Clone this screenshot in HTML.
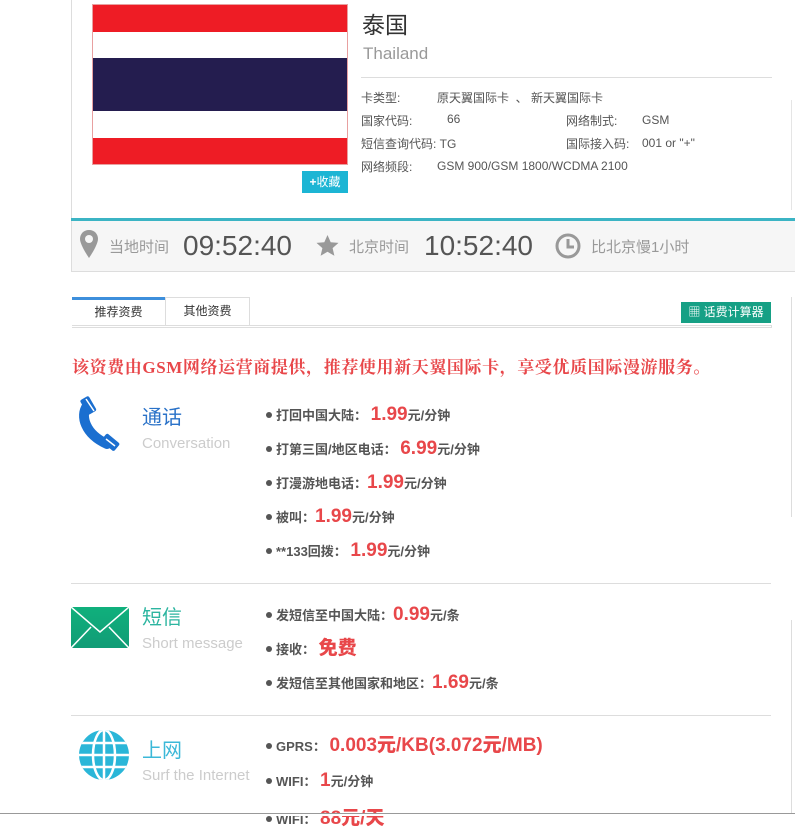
<!DOCTYPE html>
<html><head><meta charset="utf-8">
<style>
*{margin:0;padding:0;box-sizing:border-box}
body{width:795px;height:816px;overflow:hidden;background:#fff;font-family:"Liberation Sans","Noto Sans CJK SC",sans-serif;position:relative;color:#555}
.a{position:absolute;white-space:nowrap}
.sm{font-size:12px;color:#555}
.lbl{font-size:13px;font-weight:bold;color:#555;line-height:20px}
.lbl b{font-size:19px;color:#e8474a}
.dot{display:inline-block;width:6px;height:6px;border-radius:3px;background:#555;margin-right:4px;vertical-align:2px}
</style></head><body>
<div class="a" style="left:71px;top:0;width:1px;height:220px;background:#ddd"></div>
<div class="a" style="left:791px;top:100px;width:1px;height:110px;background:#e5e5e5"></div>
<div class="a" style="left:92px;top:4px;width:256px;height:161px;border:1px solid #e8a0a0">
<div style="height:27px;background:#ee1c25"></div>
<div style="height:26px;background:#fff"></div>
<div style="height:53px;background:#241d4f"></div>
<div style="height:27px;background:#fff"></div>
<div style="height:26px;background:#ee1c25"></div>
</div>
<div class="a" style="left:302px;top:171px;width:46px;height:22px;background:#1cb5d4;color:#fff;font-size:12px;line-height:22px;text-align:center"><b>+</b>收藏</div>
<div class="a" style="left:362px;top:6px;font-size:23px;color:#333">泰国</div>
<div class="a" style="left:363px;top:44px;font-size:17px;color:#999">Thailand</div>
<div class="a" style="left:361px;top:77px;width:411px;height:1px;background:#ddd"></div>
<div class="a sm" style="left:361px;top:89px">卡类型:</div>
<div class="a sm" style="left:437px;top:89px">原天翼国际卡 &nbsp;、 新天翼国际卡</div>
<div class="a sm" style="left:361px;top:112px">国家代码:</div>
<div class="a sm" style="left:447px;top:112px">66</div>
<div class="a sm" style="left:566px;top:112px">网络制式:</div>
<div class="a sm" style="left:642px;top:113px">GSM</div>
<div class="a sm" style="left:361px;top:135px">短信查询代码: TG</div>
<div class="a sm" style="left:566px;top:135px">国际接入码:</div>
<div class="a sm" style="left:642px;top:136px">001 or "+"</div>
<div class="a sm" style="left:361px;top:158px">网络频段:</div>
<div class="a sm" style="left:437px;top:159px">GSM 900/GSM 1800/WCDMA 2100</div>
<div class="a" style="left:71px;top:218px;width:724px;height:3px;background:#3bb4c4"></div>
<div class="a" style="left:71px;top:221px;width:724px;height:51px;background:#f6f6f6;border-bottom:1px solid #ddd;border-left:1px solid #ddd"></div>
<svg class="a" style="left:79px;top:229px" width="20" height="30" viewBox="0 0 20 30"><path d="M10 1C4.5 1 1 5 1 10c0 6 9 19 9 19s9-13 9-19c0-5-3.5-9-9-9z" fill="#999"/><circle cx="10" cy="10" r="4" fill="#f6f6f6"/></svg>
<div class="a" style="left:109px;top:236px;font-size:15px;color:#999">当地时间</div>
<div class="a" style="left:183px;top:230px;font-size:28px;color:#555">09:52:40</div>
<svg class="a" style="left:315px;top:234px" width="25" height="24" viewBox="0 0 24 24"><path d="M12 1l3.2 7.2 7.8.7-5.9 5.2 1.8 7.7L12 17.8l-6.9 4 1.8-7.7L1 8.9l7.8-.7z" fill="#999"/></svg>
<div class="a" style="left:349px;top:236px;font-size:15px;color:#999">北京时间</div>
<div class="a" style="left:424px;top:230px;font-size:28px;color:#555">10:52:40</div>
<svg class="a" style="left:555px;top:233px" width="26" height="26" viewBox="0 0 26 26"><circle cx="13" cy="13" r="11" fill="none" stroke="#999" stroke-width="3"/><path d="M13 6v8h6" fill="none" stroke="#999" stroke-width="3"/></svg>
<div class="a" style="left:591px;top:236px;font-size:15px;color:#999">比北京慢1小时</div>
<div class="a" style="left:72px;top:297px;width:93px;height:29px;border-top:3px solid #3d8fdc;background:#fff;font-size:12px;color:#333;text-align:center;line-height:25px">推荐资费</div>
<div class="a" style="left:165px;top:297px;width:85px;height:29px;border:1px solid #ddd;border-bottom:none;font-size:12px;color:#333;text-align:center;line-height:27px">其他资费</div>
<div class="a" style="left:72px;top:325px;width:700px;height:3px;border:1px solid #ddd;border-left:none"></div>
<div class="a" style="left:681px;top:302px;width:90px;height:21px;background:#16a085;color:#fff;font-size:12px;line-height:21px;text-align:center">▦ 话费计算器</div>
<div class="a" style="left:791px;top:297px;width:4px;height:220px;border-left:1px solid #ddd"></div>
<div class="a" style="left:791px;top:620px;width:4px;height:196px;border-left:1px solid #ddd"></div>
<div class="a" style="left:72px;top:353px;font-size:17px;font-weight:bold;color:#e8474a;letter-spacing:0.6px;font-family:'Liberation Serif','Noto Serif CJK SC',serif">该资费由GSM网络运营商提供，推荐使用新天翼国际卡，享受优质国际漫游服务。</div>
<svg class="a" style="left:77px;top:396px" width="44" height="58" viewBox="0 0 44 58"><path d="M10 10C3 20 8 38 30 48" stroke="#1b6fd0" stroke-width="10" fill="none" stroke-linecap="round"/><rect x="6" y="1" width="10" height="17" rx="2" transform="rotate(-30 11 9)" fill="#1b6fd0"/><rect x="28" y="38" width="10" height="17" rx="2" transform="rotate(-50 33 46)" fill="#1b6fd0"/><path d="M9 3l8 12M29 43l9 7" stroke="#fff" stroke-width="1.5"/></svg>
<div class="a" style="left:142px;top:401px;font-size:20px;color:#2a72c8">通话</div>
<div class="a" style="left:142px;top:435px;font-size:15px;color:#ccc">Conversation</div>
<div class="a lbl" style="left:266px;top:405px"><span class="dot"></span>打回中国大陆： <b>1.99</b>元/分钟</div>
<div class="a lbl" style="left:266px;top:439px"><span class="dot"></span>打第三国/地区电话： <b>6.99</b>元/分钟</div>
<div class="a lbl" style="left:266px;top:473px"><span class="dot"></span>打漫游地电话：<b>1.99</b>元/分钟</div>
<div class="a lbl" style="left:266px;top:507px"><span class="dot"></span>被叫：<b>1.99</b>元/分钟</div>
<div class="a lbl" style="left:266px;top:541px"><span class="dot"></span>**133回拨： <b>1.99</b>元/分钟</div>
<div class="a" style="left:71px;top:583px;width:700px;height:1px;background:#ddd"></div>
<svg class="a" style="left:71px;top:607px" width="58" height="41" viewBox="0 0 58 41"><defs><linearGradient id="g" x1="0" y1="0" x2="0" y2="1"><stop offset="0" stop-color="#10b07c"/><stop offset="1" stop-color="#119c76"/></linearGradient></defs><rect width="58" height="41" fill="url(#g)"/><path d="M0 0l29 25L58 0M0 41l20-21M58 41L38 20" stroke="#fff" stroke-width="1.5" fill="none"/></svg>
<div class="a" style="left:142px;top:601px;font-size:20px;color:#2cb5a0">短信</div>
<div class="a" style="left:142px;top:635px;font-size:15px;color:#ccc">Short message</div>
<div class="a lbl" style="left:266px;top:605px"><span class="dot"></span>发短信至中国大陆：<b>0.99</b>元/条</div>
<div class="a lbl" style="left:266px;top:639px"><span class="dot"></span>接收： <b>免费</b></div>
<div class="a lbl" style="left:266px;top:673px"><span class="dot"></span>发短信至其他国家和地区：<b>1.69</b>元/条</div>
<div class="a" style="left:71px;top:715px;width:700px;height:1px;background:#ddd"></div>
<svg class="a" style="left:79px;top:730px" width="50" height="50" viewBox="0 0 50 50"><defs><clipPath id="c"><circle cx="25" cy="25" r="25"/></clipPath></defs><circle cx="25" cy="25" r="25" fill="#2ab6d8"/><g clip-path="url(#c)" stroke="#fff" stroke-width="2.5" fill="none"><path d="M0 13h50M0 25h50M0 37h50M25 0v50"/><ellipse cx="25" cy="25" rx="11" ry="25"/></g></svg>
<div class="a" style="left:142px;top:734px;font-size:20px;color:#3bb8d8">上网</div>
<div class="a" style="left:142px;top:767px;font-size:15px;color:#ccc">Surf the Internet</div>
<div class="a lbl" style="left:266px;top:736px"><span class="dot"></span>GPRS： <b>0.003元/KB(3.072元/MB)</b></div>
<div class="a lbl" style="left:266px;top:771px"><span class="dot"></span>WIFI： <b>1</b>元/分钟</div>
<div class="a lbl" style="left:266px;top:809px"><span class="dot"></span>WIFI： <b>88元/天</b></div>
<div class="a" style="left:0;top:813px;width:795px;height:3px;background:#fff;border-top:1px solid #999"></div>
</body></html>
